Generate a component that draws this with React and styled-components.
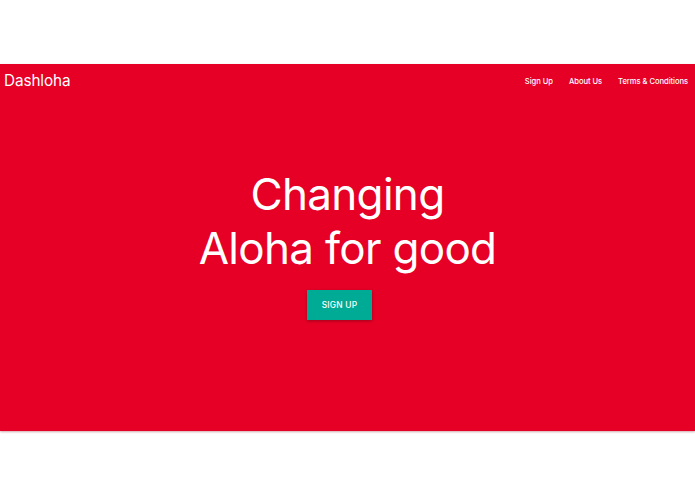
import React from 'react'
import styled, { createGlobalStyle } from 'styled-components'

const GlobalStyle = createGlobalStyle`
  html, body {
    margin: 0;
    padding: 0;
    background: #ffffff;
    font-family: Inter, "Noto Sans", Arial, sans-serif;
  }
`;

const Page = styled.div`
  width: 695px;
  height: 494px;
  display: flex;
  flex-direction: column;
  padding-top: 64px;
  box-sizing: border-box;
`;

const Hero = styled.section`
  background-color: #e60026;
  height: 367px;
  display: flex;
  flex-direction: column;
  box-shadow: 0 1px 2px rgba(120, 0, 20, 0.35);
`;

const NavBar = styled.nav`
  display: flex;
  align-items: center;
  justify-content: space-between;
  height: 32px;
  padding: 0 7px 0 4px;
`;

const Brand = styled.a`
  color: #ffffff;
  font-size: 15.3px;
  font-weight: 400;
  text-decoration: none;
  letter-spacing: -0.1px;
`;

const NavLinks = styled.ul`
  display: flex;
  gap: 16px;
  margin: 0 0 4px;
  padding: 0;
  list-style: none;

  a {
    color: #ffffff;
    font-size: 7.6px;
    font-weight: 500;
    letter-spacing: -0.05px;
    text-decoration: none;
  }
`;

const Content = styled.div`
  display: flex;
  flex-direction: column;
  align-items: center;
  padding-top: 71px;
`;

const Headline = styled.h1`
  margin: 0;
  color: #ffffff;
  font-size: 44px;
  font-weight: 400;
  line-height: 54px;
  text-align: center;
  letter-spacing: -0.7px;
`;

const Button = styled.button`
  margin: 15px 16px 0 0;
  width: 65px;
  height: 30px;
  border: none;
  background-color: #00ab96;
  color: #ffffff;
  font-family: inherit;
  font-size: 8.4px;
  font-weight: 500;
  letter-spacing: 0.2px;
  box-shadow: 0 1px 3px rgba(0, 0, 0, 0.3);
  cursor: pointer;
`;

const App = () => {
  return (
    <Page>
      <GlobalStyle />
      <Hero>
        <NavBar>
          <Brand href="#">Dashloha</Brand>
          <NavLinks>
            <li><a href="#">Sign Up</a></li>
            <li><a href="#">About Us</a></li>
            <li><a href="#">Terms &amp; Conditions</a></li>
          </NavLinks>
        </NavBar>
        <Content>
          <Headline>
            Changing<br />Aloha for good
          </Headline>
          <Button>SIGN UP</Button>
        </Content>
      </Hero>
    </Page>
  )
}

export default App
